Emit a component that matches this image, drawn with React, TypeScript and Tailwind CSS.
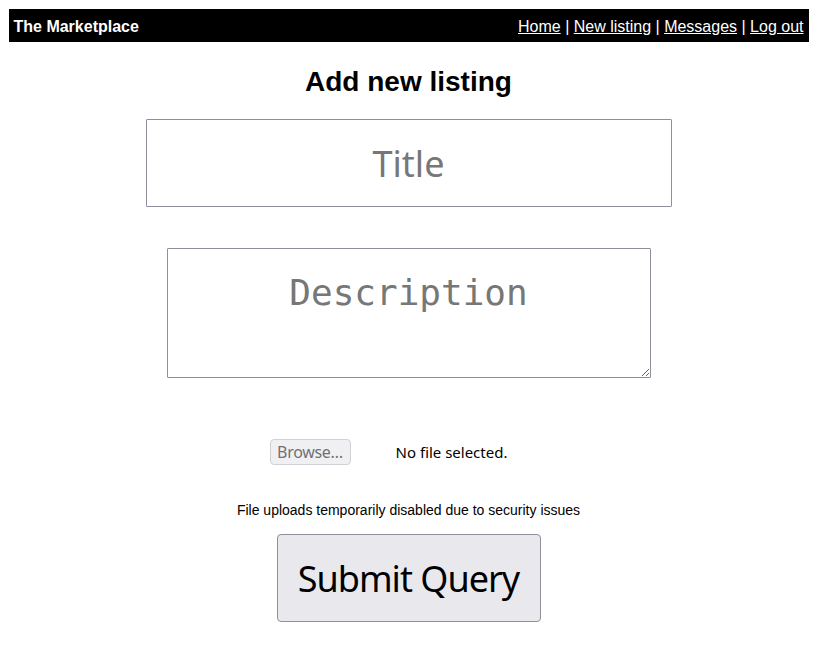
import React from "react";

const links = ["Home", "New listing", "Messages", "Log out"];

export default function App() {
    return (
        <div className="min-h-screen bg-white pt-[9px] font-['Liberation_Sans',Arial,sans-serif] text-black">
            <nav className="mx-auto flex h-[33px] w-[800px] items-center justify-between bg-black px-[5px] pt-[2px] text-[16px] text-white">
                <span className="font-bold">The Marketplace</span>
                <span>
                    {links.map((l, i) => (
                        <React.Fragment key={l}>
                            {i > 0 && " | "}
                            <a href="#" className="underline">
                                {l}
                            </a>
                        </React.Fragment>
                    ))}
                </span>
            </nav>

            <h1 className="mt-[24px] text-center text-[28px] font-bold leading-[32px]">
                Add new listing
            </h1>

            <form className="flex flex-col items-center" onSubmit={(e) => e.preventDefault()}>
                <input
                    type="text"
                    placeholder="Title"
                    className="mt-[21px] block h-[88px] w-[526px] rounded-[1px] border border-[#8f8f9d] text-center font-['Noto_Sans',sans-serif] text-[36px] outline-none placeholder:text-[#777]"
                />

                <textarea
                    placeholder="Description"
                    className="mt-[41px] block h-[130px] w-[484px] rounded-[1px] border border-[#8f8f9d] pt-[17px] text-center font-['DejaVu_Sans_Mono',monospace] text-[36px] outline-none placeholder:text-[#777]"
                />

                <div className="mt-[61px] flex h-[26px] w-[278px] items-center">
                    <button
                        type="button"
                        disabled
                        className="h-[26px] w-[81px] rounded-[4px] border border-[#d0d0d6] bg-[#f0f0f3] font-['Noto_Sans',sans-serif] text-[16px] tracking-[-0.3px] text-[#707075]"
                    >
                        Browse…
                    </button>
                    <span className="ml-[45px] font-['Noto_Sans',sans-serif] text-[15px]">
                        No file selected.
                    </span>
                </div>

                <p className="mt-[37px] text-[14px] leading-[16px]">
                    File uploads temporarily disabled due to security issues
                </p>

                <button
                    type="submit"
                    className="mt-[16px] h-[88px] w-[264px] rounded-[4px] border border-[#8f8f9d] bg-[#e9e9ed] pt-[2px] font-['Noto_Sans',sans-serif] text-[36px] tracking-[-1px]"
                >
                    Submit Query
                </button>
            </form>
        </div>
    );
}
